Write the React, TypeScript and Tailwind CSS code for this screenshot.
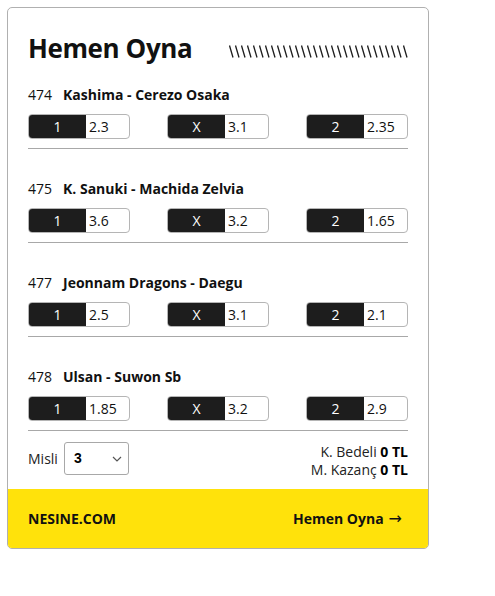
import React from 'react';

type Match = {
  no: number;
  name: string;
  odds: [string, string, string];
};

const MATCHES: Match[] = [
  { no: 474, name: 'Kashima - Cerezo Osaka', odds: ['2.3', '3.1', '2.35'] },
  { no: 475, name: 'K. Sanuki - Machida Zelvia', odds: ['3.6', '3.2', '1.65'] },
  { no: 477, name: 'Jeonnam Dragons - Daegu', odds: ['2.5', '3.1', '2.1'] },
  { no: 478, name: 'Ulsan - Suwon Sb', odds: ['1.85', '3.2', '2.9'] },
];

const LABELS = ['1', 'X', '2'];

function Hatch() {
  const lines = Array.from({ length: 30 }, (_, i) => i);
  return (
    <svg width="180" height="13" viewBox="0 0 180 13" className="block">
      {lines.map((i) => (
        <line
          key={i}
          x1={1.5 + i * 6}
          y1={0.5}
          x2={5 + i * 6}
          y2={12.5}
          stroke="#1d1d1d"
          strokeWidth="1.3"
        />
      ))}
    </svg>
  );
}

function OddButton({ label, value }: { label: string; value: string }) {
  return (
    <button className="flex h-[25px] w-[102px] overflow-hidden rounded-[4px] border border-[#b5b5b5] bg-white text-[14px] leading-none">
      <span className="flex h-full w-[57px] items-center justify-center bg-[#1d1d1d] text-white">{label}</span>
      <span className="flex h-full flex-1 items-center pl-[3px] text-[#111]">{value}</span>
    </button>
  );
}

function MatchRow({ match, first }: { match: Match; first: boolean }) {
  return (
    <div className={first ? 'mt-4' : 'mt-[29px]'}>
      <div className="flex h-5 items-center text-[14px] text-[#111]">
        <span className="w-[35px]">{match.no}</span>
        <span className="font-bold">{match.name}</span>
      </div>
      <div className="mt-[10px] flex justify-between">
        {match.odds.map((o, i) => (
          <OddButton key={i} label={LABELS[i]} value={o} />
        ))}
      </div>
      <div className="mt-[9px] h-px bg-[#a8a8a8]" />
    </div>
  );
}

export default function App() {
  return (
    <div className="min-h-[596px] w-[495px] bg-white p-[7px]" style={{ fontFamily: '"Open Sans", "Noto Sans", sans-serif' }}>
      <div className="w-[422px] overflow-hidden rounded-[5px] border border-[#b0b0b0] bg-white">
        <div className="px-5 pt-5">
          <div className="flex h-10 items-center justify-between">
            <h1 className="text-[26px] font-bold tracking-[-0.4px] text-[#111]">Hemen Oyna</h1>
            <div className="mt-[6px]">
              <Hatch />
            </div>
          </div>

          {MATCHES.map((m, i) => (
            <MatchRow key={m.no} match={m} first={i === 0} />
          ))}

          <div className="mt-[11px] flex items-start justify-between pb-[10px]">
            <div className="flex items-center gap-[6px]">
              <span className="text-[14px] text-[#222]">Misli</span>
              <div className="flex h-[33px] w-[65px] items-center justify-between rounded-[3px] border border-[#a8a8a8] bg-white pl-[9px] pr-[6px]">
                <span className="text-[14px] font-bold text-black" style={{ fontFamily: 'Arial, "Liberation Sans", sans-serif' }}>3</span>
                <svg width="10" height="6" viewBox="0 0 10 6">
                  <path d="M1 1l4 4 4-4" fill="none" stroke="#555" strokeWidth="1.2" />
                </svg>
              </div>
            </div>
            <div className="pt-px text-right text-[14px] leading-[18px] text-[#222]">
              <div>
                K. Bedeli <span className="font-bold text-black">0 TL</span>
              </div>
              <div>
                M. Kazanç <span className="font-bold text-black">0 TL</span>
              </div>
            </div>
          </div>
        </div>

        <div className="flex h-[59px] items-center justify-between bg-[#ffe20b] pl-5 pr-[26px] text-[14px] font-bold text-[#111]">
          <span>NESINE.COM</span>
          <span className="flex items-center gap-[5px]">
            Hemen Oyna
            <span className="text-[16px] font-normal" style={{ fontFamily: '"DejaVu Sans", sans-serif' }}>→</span>
          </span>
        </div>
      </div>
    </div>
  );
}
